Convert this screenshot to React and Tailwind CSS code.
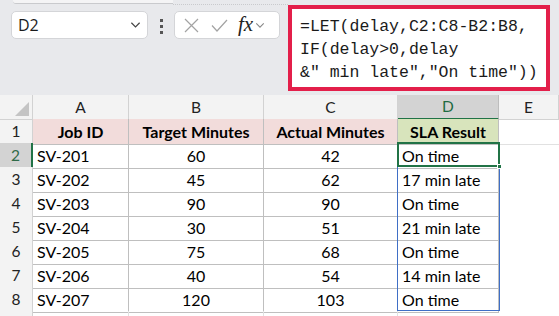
import React from 'react';

const rows = [
  ['SV-201', '60', '42', 'On time'],
  ['SV-202', '45', '62', '17 min late'],
  ['SV-203', '90', '90', 'On time'],
  ['SV-204', '30', '51', '21 min late'],
  ['SV-205', '75', '68', 'On time'],
  ['SV-206', '40', '54', '14 min late'],
  ['SV-207', '120', '103', 'On time'],
];

const cols = ['A', 'B', 'C', 'D', 'E'];
const gridCols = 'grid grid-cols-[33px_96px_135px_134px_101px_60px]';

const Chevron = ({ className }) => (
  <svg viewBox="0 0 12 8" className={className} fill="none" stroke="currentColor" strokeWidth="1.3">
    <path d="M1.5 1.5 L6 6 L10.5 1.5" />
  </svg>
);

const FormulaArea = () => (
  <div className="relative h-[95px] bg-[#e8e9ec] flex items-start">
    <div className="absolute left-[13px] top-0 w-[160px] h-[4px] bg-[#f4f4f5] border-b border-[#c9cacd] rounded-bl-[3px]" />
    <div className="absolute left-[173px] top-[4px] w-[115px] border-t border-dotted border-[#c9cacd]" />

    <div className="ml-[11px] mt-[11px] w-[137px] h-[28px] rounded-[5px] bg-white border border-[#d4d5d8] flex items-center justify-between pl-[6px] pr-[6px]">
      <span className="text-[16px] text-[#1b1b1b] font-['Open_Sans',sans-serif]">D2</span>
      <Chevron className="w-[11px] h-[8px] text-[#444]" />
    </div>

    <div className="ml-[12px] mt-[19px] flex flex-col gap-[3px]">
      <div className="w-[3px] h-[3px] bg-[#555]" />
      <div className="w-[3px] h-[3px] bg-[#555]" />
      <div className="w-[3px] h-[3px] bg-[#555]" />
    </div>

    <div className="ml-[11px] mt-[11px] w-[106px] h-[28px] rounded-[5px] bg-white border border-[#d4d5d8] flex items-center pl-[9px]">
      <svg viewBox="0 0 15 15" className="w-[15px] h-[15px]" fill="none" stroke="#a3a3a3" strokeWidth="1.2">
        <path d="M1 1 L14 14 M14 1 L1 14" />
      </svg>
      <svg viewBox="0 0 17 13" className="ml-[12px] w-[17px] h-[13px]" fill="none" stroke="#a3a3a3" strokeWidth="1.2">
        <path d="M1 6.5 L6 12 L16 1" />
      </svg>
      <span className="ml-[10px] text-[21px] italic text-[#222] font-['Liberation_Serif',serif] leading-none -mt-[2px]">fx</span>
      <Chevron className="ml-[2px] w-[10px] h-[7px] text-[#888]" />
    </div>

    <div className="ml-[8px] mt-[5px] w-[262px] h-[86px] bg-white border-[4px] border-[#e31f4a] pl-[8px] pt-[6px] font-['Liberation_Mono',monospace] text-[16.5px] leading-[23px] text-[#1a1a1a] whitespace-pre">
      <div>=LET(delay,C2:C8-B2:B8,</div>
      <div>IF(delay&gt;0,delay</div>
      <div>&amp;" min late","On time"))</div>
    </div>
  </div>
);

const Sheet = () => (
  <div className="relative bg-white font-['Lato',sans-serif] text-[16px]">
    <div className={`${gridCols} h-[24px] text-[15.5px]`}>
      <div className="relative bg-[#f3f3f3] border-r border-b border-[#d2d2d2]">
        <div className="absolute right-[3px] bottom-[3px] w-0 h-0 border-l-[14px] border-l-transparent border-b-[14px] border-b-[#c4c4c4]" />
      </div>
      {cols.map((c) => (
        <div
          key={c}
          className={
            c === 'D'
              ? 'bg-[#d3d3d3] border-r border-[#bdbdbd] border-b-2 border-b-[#217346] text-[#1f6b42] flex items-center justify-center'
              : 'bg-[#f3f3f3] border-r border-b border-[#d2d2d2] text-[#222] flex items-center justify-center'
          }
        >
          {c}
        </div>
      ))}
    </div>

    <div className={`${gridCols} h-[24px]`}>
      <div className="bg-[#f3f3f3] border-r border-b border-[#d2d2d2] flex items-center justify-center pt-[1px] text-[#222] text-[15.5px]">1</div>
      <div className="bg-[#f2dcdb] border-r border-b border-[#bfbfbf] font-bold flex items-center justify-center pt-[1px]">Job ID</div>
      <div className="bg-[#f2dcdb] border-r border-b border-[#bfbfbf] font-bold flex items-center justify-center pt-[1px]">Target Minutes</div>
      <div className="bg-[#f2dcdb] border-r border-b border-[#bfbfbf] font-bold flex items-center justify-center pt-[1px]">Actual Minutes</div>
      <div className="bg-[#d8e4bc] border-r border-b border-[#bfbfbf] font-bold flex items-center justify-center pt-[1px]">SLA Result</div>
      <div className="border-b border-[#e1e1e1]" />
    </div>

    {rows.map((r, i) => (
      <div key={r[0]} className={`${gridCols} h-[24px]`}>
        <div
          className={
            i === 0
              ? 'bg-[#d3d3d3] border-r-2 border-r-[#217346] border-b border-[#bdbdbd] text-[#2f6b48] text-[15.5px] flex items-center justify-center pt-[1px]'
              : 'bg-[#f3f3f3] border-r border-b border-[#d2d2d2] text-[#222] text-[15.5px] flex items-center justify-center pt-[1px]'
          }
        >
          {i + 2}
        </div>
        <div className="border-r border-b border-[#bfbfbf] flex items-center pl-[4px] pt-[1px]">{r[0]}</div>
        <div className="border-r border-b border-[#bfbfbf] flex items-center justify-center pt-[1px]">{r[1]}</div>
        <div className="border-r border-b border-[#bfbfbf] flex items-center justify-center pt-[1px]">{r[2]}</div>
        <div className="border-r border-b border-[#bfbfbf] flex items-center pl-[4px] pt-[1px]">{r[3]}</div>
        <div />
      </div>
    ))}

    <div className={`${gridCols} h-[6px]`}>
      <div className="bg-[#f3f3f3] border-r border-[#d2d2d2]" />
      <div className="border-r border-[#e1e1e1]" />
      <div className="border-r border-[#e1e1e1]" />
      <div className="border-r border-[#e1e1e1]" />
      <div />
      <div />
    </div>

    {/* spill range + active cell */}
    <div className="absolute left-[397px] top-[47px] w-[103px] h-[169px] border border-[#3f6fc6] pointer-events-none" />
    <div className="absolute left-[397px] top-[47px] w-[103px] h-[25px] border-2 border-[#217346] pointer-events-none">
      <div className="absolute -right-[4px] -bottom-[4px] w-[5px] h-[5px] bg-[#217346] border border-white" />
    </div>
  </div>
);

export default function App() {
  return (
    <div className="w-[559px] h-[316px] overflow-hidden bg-white">
      <FormulaArea />
      <Sheet />
    </div>
  );
}
